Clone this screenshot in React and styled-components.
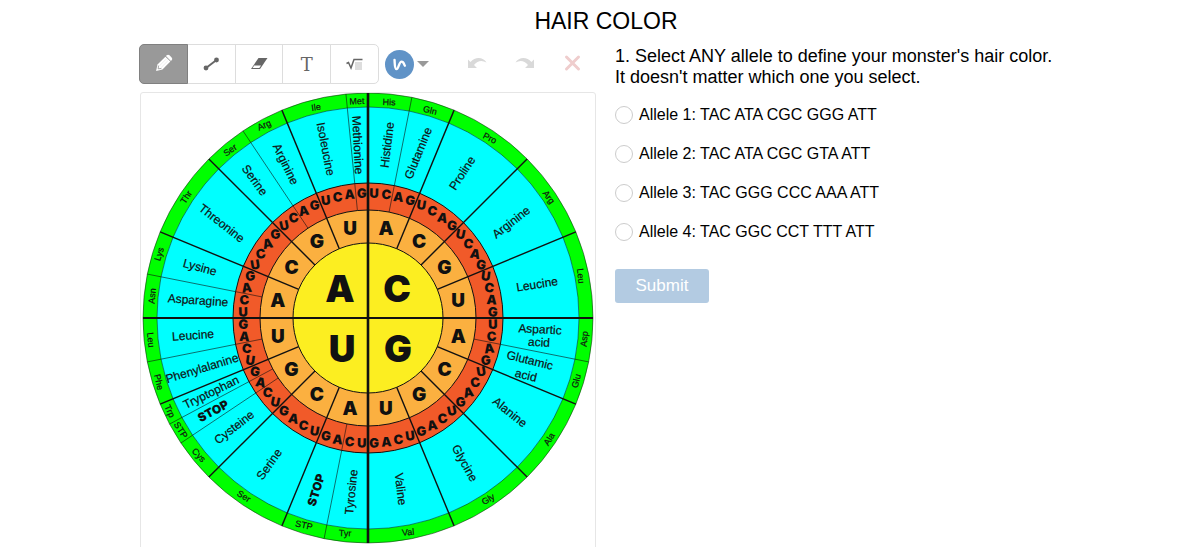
import React from 'react';
import styled, { createGlobalStyle } from 'styled-components';

const INK = '#111';

const RINGS = [
	{ r: 225, fill: '#00ff00' },
	{ r: 211, fill: '#00ffff' },
	{ r: 135, fill: '#f15a29' },
	{ r: 108, fill: '#fbb040' },
	{ r: 75, fill: '#fcee21' }
];

// degrees clockwise from the top
const THIN_SPOKES = [11.25, 101.25, 191.25, 236.25, 241.875, 258.75, 281.25, 326.25, 354.375];

const BASES = [
	{ text: 'A', x: -28, y: -29 },
	{ text: 'C', x: 29, y: -29 },
	{ text: 'U', x: -26, y: 31 },
	{ text: 'G', x: 30, y: 31 }
];

const AMINO_ACIDS = [
	{ text: 'Histidine', x: 19, y: -173, rotate: -83 },
	{ text: 'Glutamine', x: 50, y: -165, rotate: -68 },
	{ text: 'Proline', x: 94, y: -145, rotate: -57 },
	{ text: 'Arginine', x: 143, y: -96, rotate: -38 },
	{ text: 'Leucine', x: 169, y: -34, rotate: -9 },
	{ text: 'Aspartic', x: 172, y: 11, rotate: 3 },
	{ text: 'acid', x: 171, y: 24, rotate: 3 },
	{ text: 'Glutamic', x: 162, y: 42, rotate: 14 },
	{ text: 'acid', x: 158, y: 57, rotate: 14 },
	{ text: 'Alanine', x: 142, y: 94, rotate: 39 },
	{ text: 'Glycine', x: 97, y: 145, rotate: 61 },
	{ text: 'Valine', x: 33, y: 171, rotate: 83 },
	{ text: 'Tyrosine', x: -17, y: 174, rotate: -84 },
	{ text: 'STOP', x: -52, y: 172, rotate: -73, stop: true },
	{ text: 'Serine', x: -99, y: 146, rotate: -55 },
	{ text: 'Cysteine', x: -134, y: 109, rotate: -38 },
	{ text: 'STOP', x: -155, y: 93, rotate: -28, stop: true },
	{ text: 'Tryptophan', x: -157, y: 74, rotate: -26 },
	{ text: 'Phenylalanine', x: -166, y: 50, rotate: -17 },
	{ text: 'Leucine', x: -175, y: 17, rotate: -4 },
	{ text: 'Asparagine', x: -170, y: -18, rotate: 4 },
	{ text: 'Lysine', x: -168, y: -51, rotate: 15 },
	{ text: 'Threonine', x: -146, y: -95, rotate: 38 },
	{ text: 'Serine', x: -113, y: -138, rotate: 54 },
	{ text: 'Arginine', x: -82, y: -154, rotate: 64 },
	{ text: 'Isoleucine', x: -42, y: -169, rotate: 79 },
	{ text: 'Methionine', x: -10, y: -173, rotate: 87 }
];

const SHORT_NAMES = [
	{ text: 'His', x: 21, y: -216, rotate: 2 },
	{ text: 'Gln', x: 62, y: -208, rotate: 14 },
	{ text: 'Pro', x: 122, y: -180, rotate: 27 },
	{ text: 'Arg', x: 181, y: -121, rotate: 54 },
	{ text: 'Leu', x: 213, y: -42, rotate: 84 },
	{ text: 'Asp', x: 216, y: 21, rotate: -84 },
	{ text: 'Glu', x: 208, y: 63, rotate: -76 },
	{ text: 'Ala', x: 181, y: 121, rotate: -57 },
	{ text: 'Gly', x: 120, y: 181, rotate: -31 },
	{ text: 'Val', x: 40, y: 214, rotate: -5 },
	{ text: 'Tyr', x: -23, y: 215, rotate: 2 },
	{ text: 'STP', x: -64, y: 207, rotate: 12 },
	{ text: 'Ser', x: -124, y: 178, rotate: 32 },
	{ text: 'Cys', x: -169, y: 137, rotate: 47 },
	{ text: 'STP', x: -187, y: 112, rotate: 58 },
	{ text: 'Trp', x: -198, y: 93, rotate: 65 },
	{ text: 'Phe', x: -209, y: 64, rotate: 77 },
	{ text: 'Leu', x: -217, y: 22, rotate: 84 },
	{ text: 'Asn', x: -216, y: -22, rotate: -85 },
	{ text: 'Lys', x: -209, y: -64, rotate: -73 },
	{ text: 'Thr', x: -182, y: -121, rotate: -56 },
	{ text: 'Ser', x: -138, y: -168, rotate: -36 },
	{ text: 'Arg', x: -104, y: -193, rotate: -24 },
	{ text: 'Ile', x: -52, y: -211, rotate: -8 },
	{ text: 'Met', x: -11, y: -217, rotate: -2 }
];

const ALLELES = [
	{ id: 'allele-1', label: 'Allele 1: TAC ATA CGC GGG ATT' },
	{ id: 'allele-2', label: 'Allele 2: TAC ATA CGC GTA ATT' },
	{ id: 'allele-3', label: 'Allele 3: TAC GGG CCC AAA ATT' },
	{ id: 'allele-4', label: 'Allele 4: TAC GGC CCT TTT ATT' }
];

const polar = (r, degrees) => {
	const a = (degrees * Math.PI) / 180;
	return { x: r * Math.sin(a), y: -r * Math.cos(a) };
};

const Spoke = ({ angle, from, to, width }) => {
	const a = polar(from, angle);
	const b = polar(to, angle);
	return <line x1={a.x} y1={a.y} x2={b.x} y2={b.y} stroke={INK} strokeWidth={width} />;
};

const Label = ({ as: Text, text, x, y, rotate = 0, ...rest }) => (
	<Text transform={`translate(${x} ${y}) rotate(${rotate})`} dy="0.36em" {...rest}>
		{text}
	</Text>
);

const CodonWheel = () => (
	<Wheel viewBox="-227 -225 454 470" role="img" aria-label="Codon wheel">
		{RINGS.map(({ r, fill }) => (
			<circle key={r} r={r} fill={fill} stroke={INK} strokeWidth={r > 200 ? 0.5 : 1} />
		))}
		{THIN_SPOKES.map((angle) => (
			<Spoke key={angle} angle={angle} from={108} to={225} width={0.6} />
		))}
		{Array.from({ length: 16 }, (_, i) => (
			<Spoke key={i} angle={i * 22.5} from={75} to={225} width={1.4} />
		))}
		<line x1="-225" x2="225" stroke={INK} strokeWidth="2" />
		<line y1="-225" y2="225" stroke={INK} strokeWidth="2.6" />

		{BASES.map((base) => (
			<Label key={base.text} as={BaseLetter} {...base} />
		))}
		{Array.from({ length: 16 }, (_, i) => (
			<Label key={i} as={SecondLetter} text={'ACGU'[i % 4]} {...polar(92, 11.25 + i * 22.5)} />
		))}
		{Array.from({ length: 64 }, (_, i) => {
			const angle = (i + 0.5) * 5.625;
			const tilt = 12 * Math.sin((angle * Math.PI) / 90);
			return <Label key={i} as={ThirdLetter} text={'UCAG'[i % 4]} rotate={tilt} {...polar(125, angle)} />;
		})}
		{AMINO_ACIDS.map(({ stop, ...acid }, i) => (
			<Label key={i} as={stop ? StopName : AcidName} {...acid} />
		))}
		{SHORT_NAMES.map((name, i) => (
			<Label key={i} as={ShortName} {...name} />
		))}
	</Wheel>
);

const PencilIcon = () => (
	<Icon viewBox="0 0 24 24">
		<g transform="translate(12.500 11.500) rotate(45)" fill="#fff">
			<path d="M-3.500 -8 Q-3.500 -10 -1.500 -10 H1.500 Q3.500 -10 3.500 -8 V-7 H-3.500Z" />
			<path d="M-3.500 -6.200 H3.500 V5 L0 10.500 L-3.500 5Z" />
			<path d="M-1.200 -5 V4.500 M1.200 -5 V4.500" stroke="#ddd" strokeWidth="0.5" />
			<path d="M-2 5 L0 7.500 L2 5" fill="none" stroke="#999" strokeWidth="0.8" />
		</g>
	</Icon>
);

const LineIcon = () => (
	<Icon viewBox="0 0 24 24">
		<path d="M7 16 L17.500 8" stroke="#666" strokeWidth="2" />
		<circle cx="7" cy="16" r="2.400" fill="#666" />
		<circle cx="17.500" cy="8" r="2.400" fill="#666" />
	</Icon>
);

const EraserIcon = () => (
	<Icon viewBox="0 0 24 24">
		<path d="M11.500 6 H20.500 L13 17 H4Z" fill="#666" />
		<path d="M7.200 13.500 H14 L12.300 16 H5.600Z" fill="#fff" />
	</Icon>
);

const RootIcon = () => (
	<Icon viewBox="0 0 24 24">
		<rect x="12" y="10" width="7" height="8" fill="#ddd" />
		<path d="M3.500 11.500 L5.500 10.500 L8 16 L11 7.500 H19.500" fill="none" stroke="#666" strokeWidth="1.500" />
	</Icon>
);

const SquiggleIcon = () => (
	<svg width="29" height="29" viewBox="-14 -14 28 28" aria-hidden="true">
		<circle r="14" fill="#6093c7" />
		<path
			d="M-4.800 -4.500 C-4.500 -1 -4.800 4.500 -2.800 4.500 C-0.800 4.500 -0.500 -2.800 2 -2.800 C4.500 -2.800 4 0 5.200 1.200"
			fill="none"
			stroke="#fff"
			strokeWidth="2.300"
			strokeLinecap="round"
		/>
	</svg>
);

const ArrowIcon = ({ flip }) => (
	<Icon viewBox="0 0 24 24">
		<path
			transform={flip ? 'translate(24 0) scale(-1 1)' : undefined}
			d="M3 7.500 L5.500 10 C10 4.500 18 4.500 21.500 10.500 C17 7.800 12.500 8.500 9 13 L12 16 H3Z"
			fill="#d9d9d9"
		/>
	</Icon>
);

const ClearIcon = () => (
	<Icon viewBox="0 0 24 24">
		<path d="M5.500 5 L17.500 17 M17.500 5 L5.500 17" stroke="#efcdcd" strokeWidth="3" strokeLinecap="round" />
	</Icon>
);

const Toolbar = () => (
	<ToolbarRow>
		<ToolGroup>
			<ToolButton type="button" aria-label="Pencil" $active>
				<PencilIcon />
			</ToolButton>
			<ToolButton type="button" aria-label="Line">
				<LineIcon />
			</ToolButton>
			<ToolButton type="button" aria-label="Eraser">
				<EraserIcon />
			</ToolButton>
			<ToolButton type="button">T</ToolButton>
			<ToolButton type="button" aria-label="Equation">
				<RootIcon />
			</ToolButton>
		</ToolGroup>
		<StyleButton type="button" aria-label="Stroke style">
			<SquiggleIcon />
			<Caret />
		</StyleButton>
		<PlainButton type="button" aria-label="Undo">
			<ArrowIcon />
		</PlainButton>
		<PlainButton type="button" aria-label="Redo">
			<ArrowIcon flip />
		</PlainButton>
		<PlainButton type="button" aria-label="Clear">
			<ClearIcon />
		</PlainButton>
	</ToolbarRow>
);

class App extends React.Component {
	constructor(props) {
		super(props);
		this.state = { allele: '' };
		this.onChange = this.onChange.bind(this);
	}

	onChange(e) {
		this.setState({ allele: e.target.value });
	}

	render() {
		return (
			<Page>
				<GlobalStyle />
				<Title>HAIR COLOR</Title>
				<Columns>
					<div>
						<Toolbar />
						<Canvas>
							<CodonWheel />
						</Canvas>
					</div>
					<Question>
						<Prompt>
							1. Select ANY allele to define your monster's hair color.
							<br />
							It doesn't matter which one you select.
						</Prompt>
						{ALLELES.map(({ id, label }) => (
							<Option key={id} htmlFor={id}>
								<Radio
									id={id}
									type="radio"
									name="allele"
									value={id}
									checked={this.state.allele === id}
									onChange={this.onChange}
								/>
								{label}
							</Option>
						))}
						<Submit type="submit" disabled={!this.state.allele}>
							Submit
						</Submit>
					</Question>
				</Columns>
			</Page>
		);
	}
}

export default App;

const GlobalStyle = createGlobalStyle`
	* {
		box-sizing: border-box;
	}
	body {
		margin: 0;
		background: #fff;
		color: #000;
		font-family: "Liberation Sans", Arial, sans-serif;
	}
`;

const Page = styled.main`
	max-width: 946px;
	margin: 0 auto;
	padding-left: 12px;
`;

const Title = styled.h1`
	margin: 0 0 2px;
	font-size: 23px;
	font-weight: normal;
	line-height: 42px;
	text-align: center;
`;

const Columns = styled.div`
	display: grid;
	grid-template-columns: minmax(0, 1fr) minmax(0, 1fr);
	column-gap: 18px;
`;

const ToolbarRow = styled.div`
	display: flex;
	align-items: center;
	height: 40px;
	margin-bottom: 8px;
`;

const ToolGroup = styled.div`
	display: flex;
	flex: 0 1 240px;
	height: 40px;
`;

const ToolButton = styled.button`
	flex: 1;
	display: flex;
	align-items: center;
	justify-content: center;
	padding: 0;
	border: 1px solid ${(props) => (props.$active ? '#808080' : '#ddd')};
	background: ${(props) => (props.$active ? '#999' : '#fff')};
	color: #666;
	font-family: "DejaVu Serif", serif;
	font-size: 18px;
	position: relative;
	z-index: ${(props) => (props.$active ? 1 : 0)};

	& + & {
		margin-left: -1px;
	}
	&:first-child {
		border-radius: 5px 0 0 5px;
	}
	&:last-child {
		border-radius: 0 5px 5px 0;
	}
`;

const StyleButton = styled.button`
	display: flex;
	align-items: center;
	gap: 3px;
	margin: 0 auto 0 6px;
	padding: 0;
	border: none;
	background: none;
`;

const Caret = styled.span`
	border: 6px solid transparent;
	border-top-color: #999;
	border-bottom: none;
`;

const PlainButton = styled.button`
	flex: 0 1 48px;
	display: flex;
	align-items: center;
	justify-content: center;
	height: 40px;
	padding: 0;
	border: none;
	background: none;
`;

const Icon = styled.svg.attrs({ 'aria-hidden': true })`
	width: 24px;
	height: 24px;
`;

const Canvas = styled.div`
	margin: 0 1px;
	border: 1px solid #e6e6e6;
	border-radius: 3px;
`;

const Wheel = styled.svg`
	display: block;
	width: 100%;
`;

const WheelText = styled.text`
	fill: ${INK};
	text-anchor: middle;
`;

const HeavyText = styled(WheelText)`
	font-family: Inter, "Liberation Sans", sans-serif;
	font-weight: 900;
`;

const BaseLetter = styled(HeavyText)`
	font-size: 37px;
`;

const SecondLetter = styled(HeavyText)`
	font-size: 19px;
`;

const ThirdLetter = styled(HeavyText)`
	font-size: 13px;
`;

const StopName = styled(HeavyText)`
	font-size: 12px;
`;

const AcidName = styled(WheelText)`
	font-size: 12px;
	stroke: ${INK};
	stroke-width: 0.2;
`;

const ShortName = styled(WheelText)`
	font-size: 9px;
	stroke: ${INK};
	stroke-width: 0.2;
`;

const Question = styled.form`
	display: flex;
	flex-direction: column;
	align-items: flex-start;
`;

const Prompt = styled.p`
	margin: 2px 0 7px;
	font-size: 18px;
	line-height: 21px;
`;

const Option = styled.label`
	display: flex;
	align-items: center;
	gap: 6px;
	height: 39px;
	font-size: 16px;
`;

const Radio = styled.input`
	appearance: none;
	width: 18px;
	height: 18px;
	margin: 0;
	border: 1px solid #ccc;
	border-radius: 50%;
	background: #fff;

	&:checked {
		border: 5px solid #6093c7;
	}
`;

const Submit = styled.button`
	width: 94px;
	height: 34px;
	margin-top: 18px;
	padding: 0;
	border: none;
	border-radius: 3px;
	background: #6093c7;
	color: #fff;
	font-family: inherit;
	font-size: 17px;

	&:disabled {
		background: #b3cbe2;
	}
`;
